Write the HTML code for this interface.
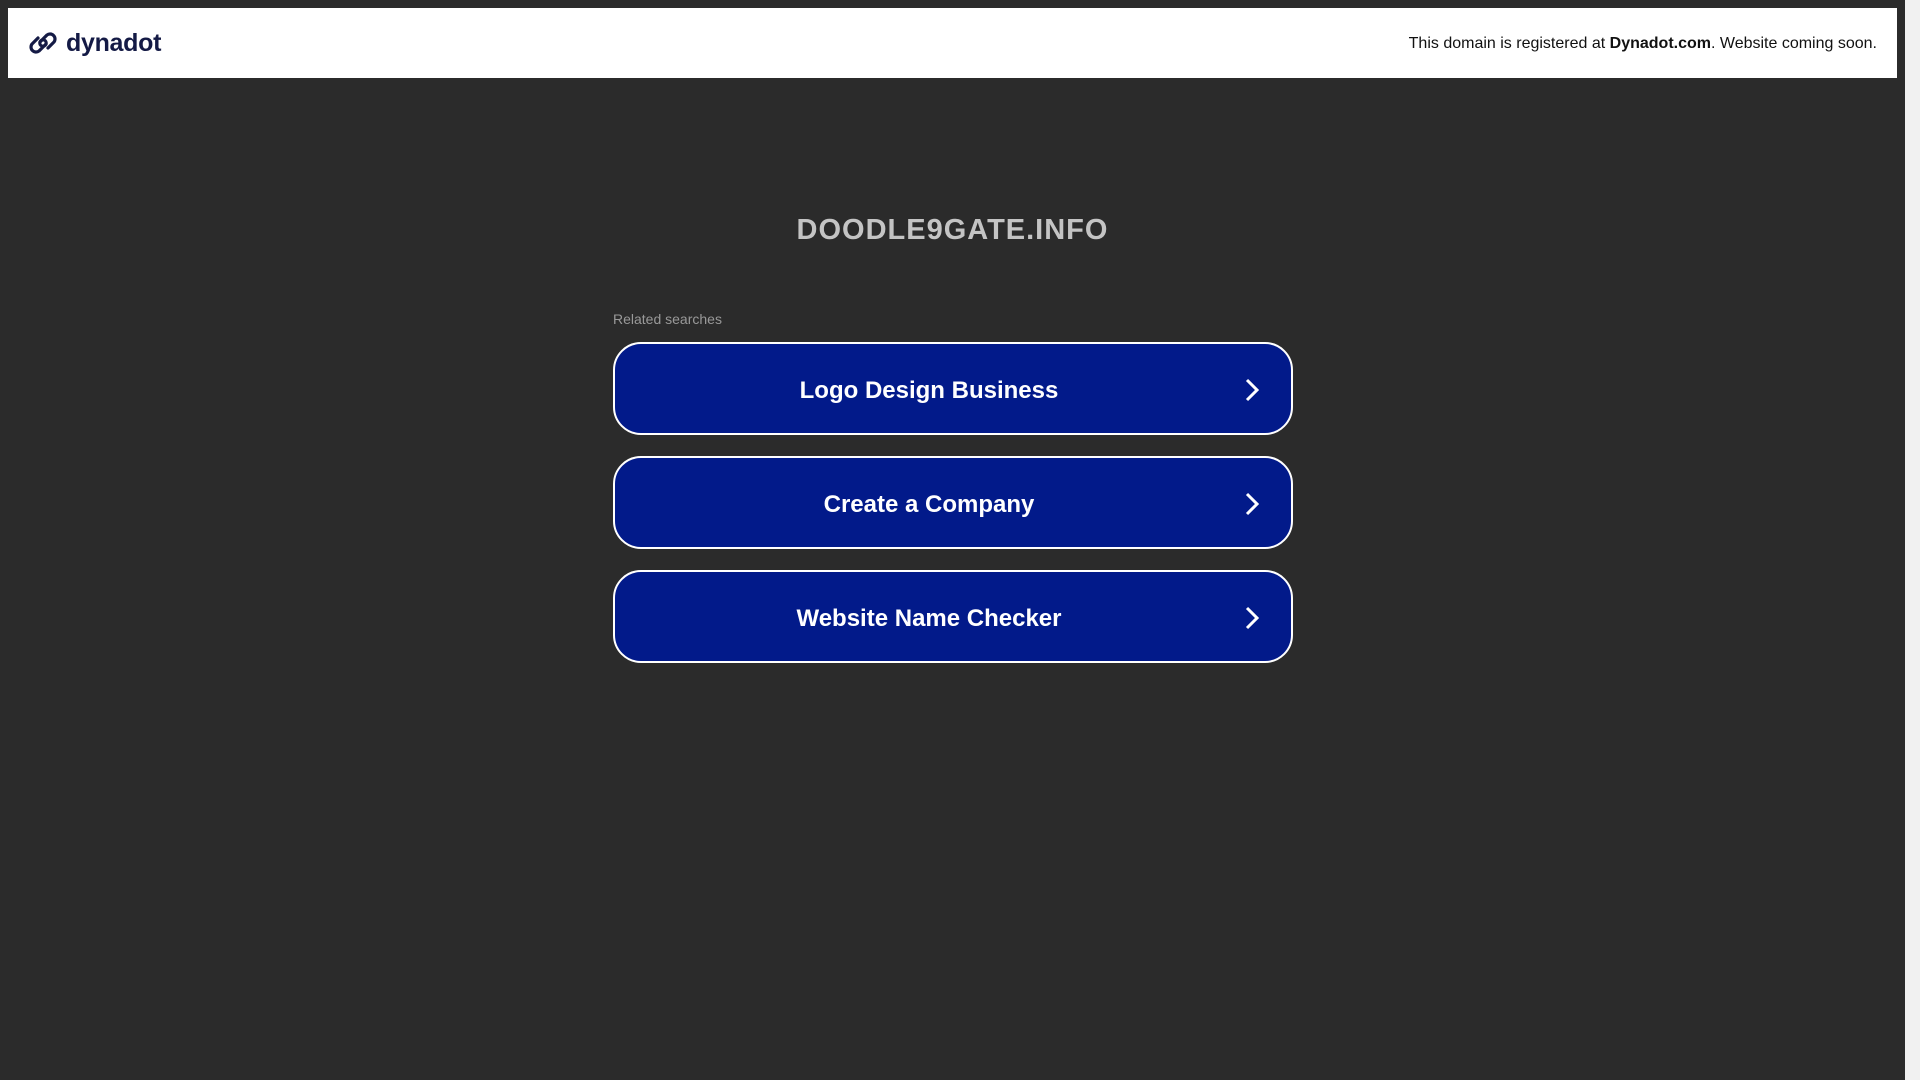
<!DOCTYPE html>
<html><head><style>
body{margin:0;width:1920px;height:1080px;background:#2b2b2b;font-family:"Liberation Sans",sans-serif;position:relative;overflow:hidden}
.hdr{position:absolute;left:8px;top:8px;width:1889px;height:70px;background:#fff}
.logo{position:absolute;left:19px;top:19px}
.lt{position:absolute;left:58px;top:21px;font-size:25px;font-weight:bold;color:#141a45;letter-spacing:-0.3px}
.rt{position:absolute;right:20px;top:27px;font-size:16px;color:#111}
.sb{position:absolute;left:1905px;top:0;width:15px;height:1080px;background:#f1f1f1}
.title{position:absolute;left:0;width:1905px;top:214px;text-align:center;font-size:29px;font-weight:bold;color:#c4c4c4;letter-spacing:1px}
.rel{position:absolute;left:613px;top:311px;font-size:14px;color:#999}
.btn{position:absolute;left:613px;width:676px;height:89px;border:2px solid #fff;border-radius:28px;background:#021a8a;color:#fff;font-size:24px;font-weight:bold}
.btn span{position:absolute;left:0;width:628px;text-align:center;top:33px}
.btn svg{position:absolute;left:630px;top:34px}
</style></head><body>
<div class="hdr">
<svg class="logo" width="32" height="32" viewBox="0 0 32 32" fill="none" stroke="#141a45" stroke-width="3.2" stroke-linecap="round"><path d="M13 15 L20 8 a5 5 0 0 1 7 7 l-6 6"/><path d="M19 17 L12 24 a5 5 0 0 1 -7 -7 l6 -6"/><circle cx="16" cy="16" r="3.2"/></svg>
<div class="lt">dynadot</div>
<div class="rt">This domain is registered at <b>Dynadot.com</b>. Website coming soon.</div>
</div>
<div class="sb"></div>
<div class="title">DOODLE9GATE.INFO</div>
<div class="rel">Related searches</div>
<div class="btn" style="top:342px"><span>Logo Design Business</span><svg width="14" height="24" viewBox="0 0 14 24"><path d="M2 2 L12 12 L2 22" stroke="#fff" stroke-width="3" fill="none"/></svg></div>
<div class="btn" style="top:456px"><span>Create a Company</span><svg width="14" height="24" viewBox="0 0 14 24"><path d="M2 2 L12 12 L2 22" stroke="#fff" stroke-width="3" fill="none"/></svg></div>
<div class="btn" style="top:570px"><span>Website Name Checker</span><svg width="14" height="24" viewBox="0 0 14 24"><path d="M2 2 L12 12 L2 22" stroke="#fff" stroke-width="3" fill="none"/></svg></div>
</body></html>
